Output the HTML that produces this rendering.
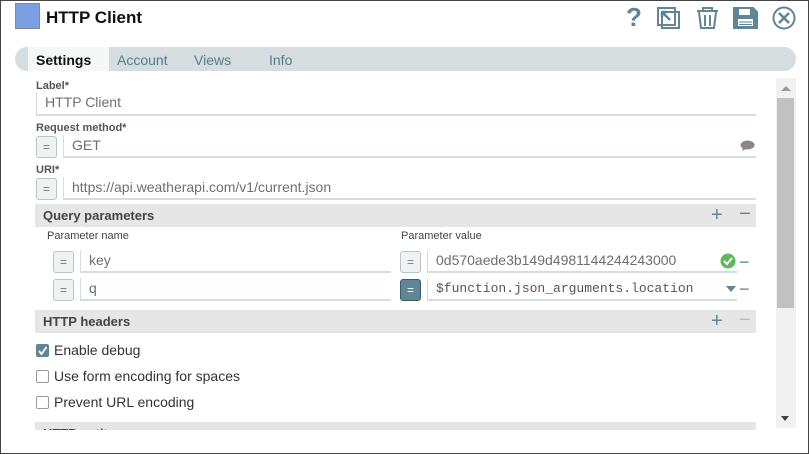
<!DOCTYPE html>
<html><head><style>
*{margin:0;padding:0;box-sizing:border-box}
body{width:809px;height:454px;background:#fff;font-family:"Liberation Sans",sans-serif;position:relative;overflow:hidden}
.a{position:absolute}
.lbl{font-size:11px;font-weight:bold;color:#555}
.inp{position:absolute;border-left:1px solid #d5dde0;border-bottom:2px solid #d5dde0;font-size:14px;color:#6f6f6f;padding-left:8px;line-height:21px}
.eq{position:absolute;width:21px;height:22px;border:1px solid #b8c4c8;border-radius:3px;background:#eef2f3;color:#777;font-size:12px;text-align:center;line-height:20px}
.hdr{position:absolute;left:35px;width:721px;height:23px;background:#e6e6e6;font-size:13px;font-weight:bold;color:#444;padding-left:8px;line-height:23px}
.pm{position:absolute;font-size:20px;color:#5f8596;line-height:20px}
.cb{position:absolute;left:36px;width:13px;height:13px;border:1px solid #999;border-radius:2px;background:#fff}
.ct{position:absolute;left:54px;font-size:14px;color:#333}
</style></head><body>
<div class="a" style="left:0;top:0;width:809px;height:454px;border:1px solid #444;z-index:5"></div>
<div class="a" style="left:15px;top:3px;width:25px;height:26px;background:#7b9fe0;border:1px solid #888"></div>
<div class="a" style="left:46px;top:8px;font-size:17px;font-weight:bold;color:#111">HTTP Client</div>
<svg class="a" style="left:620px;top:3px" width="185" height="30" viewBox="620 3 185 30" fill="none" stroke="#5f8596" stroke-width="2">
<text x="626" y="26" font-size="26" font-weight="bold" fill="#5f8596" stroke="none" font-family="Liberation Sans">?</text>
<rect x="658" y="8" width="17" height="17" /><rect x="662" y="12" width="17" height="16"/><path d="M662 12 L670 20 M662 12 h5 M662 12 v5" stroke-width="2.5"/>
<path d="M697 11 h21 M703 11 v-3 h9 v3 M699 12 l2 16 h13 l2-16 M705 15 v11 M710 15 v11"/>
<path d="M734 8 h19 l4 4 v16 h-23 z" fill="#5f8596"/><rect x="739" y="9" width="11" height="6" fill="#fff" stroke="none"/><rect x="738" y="19" width="15" height="7" fill="#fff" stroke="none"/><path d="M739 22 h13 M739 24.5 h13" stroke-width="1"/>
<circle cx="784" cy="18" r="10.5"/><path d="M779 13 l10 10 M789 13 l-10 10" stroke-width="2.5"/>
</svg>
<div class="a" style="left:15px;top:47px;width:781px;height:24px;background:#d5dde0;border-radius:12px"></div>
<div class="a" style="left:28px;top:47px;width:81px;height:24px;background:#f6f8f8"></div>
<div class="a" style="left:36px;top:52px;font-size:14px;font-weight:bold;color:#111">Settings</div>
<div class="a" style="left:117px;top:52px;font-size:14px;color:#587b88">Account</div>
<div class="a" style="left:194px;top:52px;font-size:14px;color:#587b88">Views</div>
<div class="a" style="left:269px;top:52px;font-size:14px;color:#587b88">Info</div>
<div class="a" style="left:776px;top:78px;width:20px;height:350px;background:#f1f1f1"></div>
<div class="a" style="left:777px;top:98px;width:17px;height:210px;background:#c1c1c1"></div>
<div class="a" style="left:781px;top:86px;width:0;height:0;border-left:5px solid transparent;border-right:5px solid transparent;border-bottom:5px solid #999"></div>
<div class="a" style="left:781px;top:416px;width:0;height:0;border-left:4px solid transparent;border-right:4px solid transparent;border-top:5px solid #444"></div>
<div class="a lbl" style="left:36px;top:80px">Label*</div>
<div class="inp" style="left:36px;top:92px;width:720px;height:24px">HTTP Client</div>
<div class="a lbl" style="left:36px;top:122px">Request method*</div>
<div class="eq" style="left:36px;top:136px">=</div>
<div class="inp" style="left:63px;top:135px;width:693px;height:23px">GET</div>
<svg class="a" style="left:740px;top:140px" width="16" height="12"><ellipse cx="7.5" cy="5" rx="7" ry="4.5" fill="#888"/><path d="M3 8 l-1 3 l4-2z" fill="#888"/></svg>
<div class="a lbl" style="left:36px;top:164px">URI*</div>
<div class="eq" style="left:36px;top:178px">=</div>
<div class="inp" style="left:63px;top:177px;width:693px;height:23px">https://api.weatherapi.com/v1/current.json</div>
<div class="hdr" style="top:204px">Query parameters</div>
<div class="pm" style="left:711px;top:205px">+</div>
<div class="pm" style="left:739px;top:204px">−</div>
<div class="a lbl" style="left:47px;top:230px;font-weight:normal;font-size:11px;color:#444">Parameter name</div>
<div class="a lbl" style="left:401px;top:230px;font-weight:normal;font-size:11px;color:#444">Parameter value</div>
<div class="eq" style="left:53px;top:251px">=</div>
<div class="inp" style="left:80px;top:250px;width:311px;height:23px">key</div>
<div class="eq" style="left:400px;top:251px">=</div>
<div class="inp" style="left:427px;top:250px;width:310px;height:23px">0d570aede3b149d4981144244243000</div>
<svg class="a" style="left:720px;top:253px" width="16" height="16"><circle cx="8" cy="8" r="7.5" fill="#5cb85c"/><path d="M4 8 l3 3 l5-6" stroke="#fff" stroke-width="2" fill="none"/></svg>
<div class="pm" style="left:739px;top:252px;font-size:18px">−</div>
<div class="eq" style="left:53px;top:279px">=</div>
<div class="inp" style="left:80px;top:278px;width:311px;height:23px">q</div>
<div class="eq" style="left:400px;top:279px;background:#5f8596;border-color:#3d5c68;color:#fff">=</div>
<div class="inp" style="left:427px;top:278px;width:310px;height:23px;font-family:'Liberation Mono',monospace;font-size:13px;color:#555">$function.json_arguments.location</div>
<div class="a" style="left:726px;top:286px;border-left:5px solid transparent;border-right:5px solid transparent;border-top:6px solid #5f8596"></div>
<div class="pm" style="left:739px;top:279px;font-size:18px">−</div>
<div class="hdr" style="top:310px">HTTP headers</div>
<div class="pm" style="left:711px;top:311px">+</div>
<div class="pm" style="left:739px;top:310px;color:#bbb">−</div>
<div class="cb" style="top:344px;background:#5f8596;border-color:#5f8596"></div>
<svg class="a" style="left:36px;top:344px" width="13" height="13"><path d="M3 7 l2.5 3 l5-7" stroke="#fff" stroke-width="1.8" fill="none"/></svg>
<div class="ct" style="top:342px">Enable debug</div>
<div class="cb" style="top:370px"></div>
<div class="ct" style="top:368px">Use form encoding for spaces</div>
<div class="cb" style="top:396px"></div>
<div class="ct" style="top:394px">Prevent URL encoding</div>
<div class="a" style="left:35px;top:422px;width:721px;height:8px;background:#e6e6e6;overflow:hidden"><div style="padding-left:8px;font-size:13px;font-weight:bold;color:#444;line-height:23px">HTTP entity</div></div>
</body></html>
